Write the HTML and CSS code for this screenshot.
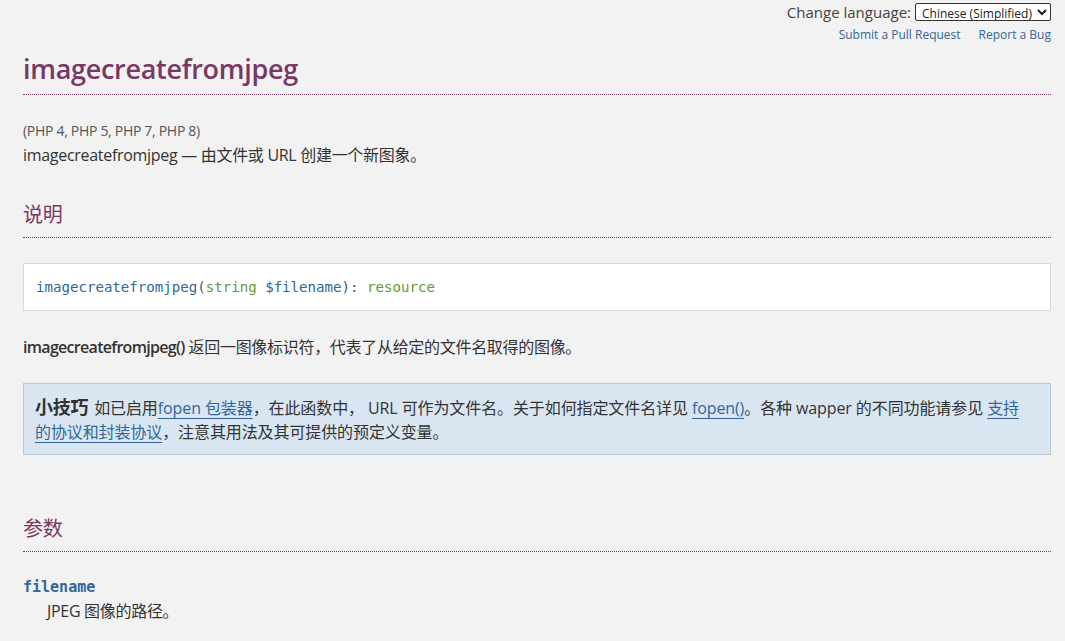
FILE: index.html
```html
<!DOCTYPE html>
<html lang="zh-CN">
<head>
<meta charset="utf-8">
<title>imagecreatefromjpeg</title>
<link rel="stylesheet" href="styles.css">
</head>
<body>
<div class="page">
  <div class="topbar">
    <div class="lang">
      <label class="lang-label">Change language:</label>
      <select class="lang-select"><option>Chinese (Simplified)</option></select>
    </div>
    <div class="edit-links">
      <a href="#">Submit a Pull Request</a>
      <a href="#">Report a Bug</a>
    </div>
  </div>

  <h1 class="refname">imagecreatefromjpeg</h1>

  <div class="refnamediv">
    <p class="verinfo">(PHP 4, PHP 5, PHP 7, PHP 8)</p>
    <p class="refpurpose">imagecreatefromjpeg — 由文件或 URL 创建一个新图象。</p>
  </div>

  <h2 class="section-title">说明</h2>
  <div class="methodsynopsis"><span class="fn">imagecreatefromjpeg</span><span class="punc">(</span><span class="type">string</span> <span class="var">$filename</span><span class="punc">): </span><span class="type">resource</span></div>

  <p class="para"><strong>imagecreatefromjpeg()</strong> 返回一图像标识符，代表了从给定的文件名取得的图像。</p>

  <div class="tip">
    <strong class="tip-title">小技巧</strong> 如已启用<a href="#">fopen 包装器</a>，在此函数中， URL 可作为文件名。关于如何指定文件名详见 <a href="#">fopen()</a>。各种 wapper 的不同功能请参见 <a href="#">支持的协议和封装协议</a>，注意其用法及其可提供的预定义变量。
  </div>

  <h2 class="section-title params">参数</h2>
  <dl class="params-list">
    <dt class="param-name">filename</dt>
    <dd class="param-desc">JPEG 图像的路径。</dd>
  </dl>
</div>
</body>
</html>
```

FILE: styles.css
```css
html, body {
  margin: 0;
  padding: 0;
  background: #f2f2f2;
}
body {
  font-family: "Open Sans", "Noto Sans CJK SC", sans-serif;
  color: #333333;
  font-size: 16px;
  letter-spacing: -0.3px;
}
a {
  color: #336699;
  text-decoration: underline;
  text-decoration-thickness: 1px;
  text-underline-offset: 4px;
}
.page {
  padding: 0 14px 0 23px;
}
.topbar {
  display: flex;
  flex-direction: column;
  align-items: flex-end;
  letter-spacing: 0;
}
.lang {
  display: flex;
  align-items: center;
  gap: 4px;
  height: 23px;
}
.lang-label {
  font-size: 15px;
  color: #444;
}
.lang-select {
  font-family: "Open Sans", sans-serif;
  font-size: 12px;
  height: 18px;
  width: 136px;
  padding: 0 2px;
  border: 1px solid #333;
  border-radius: 2px;
  background: #fff;
  color: #222;
}
.edit-links {
  display: flex;
  gap: 18px;
  margin-top: 3px;
  font-size: 12px;
}
.edit-links a {
  text-decoration: none;
}
.refname {
  margin: 7px 0 0;
  font-size: 27px;
  font-weight: 600;
  color: #793862;
  line-height: 38px;
  padding-bottom: 6px;
  border-bottom: 1px dotted #793862;
  letter-spacing: -0.3px;
}
.refnamediv {
  margin-top: 25px;
}
.verinfo {
  margin: 0;
  font-size: 14px;
  color: #555;
  line-height: 22px;
}
.refpurpose {
  margin: 0;
  line-height: 26px;
}
.section-title {
  margin: 33px 0 0;
  font-size: 20px;
  font-weight: 400;
  color: #793862;
  line-height: 28px;
  padding-bottom: 8px;
  border-bottom: 1px dotted #793862;
}
.methodsynopsis {
  margin-top: 25px;
  background: #fff;
  border: 1px solid #d9d9d9;
  padding: 12px 12px;
  font-family: "DejaVu Sans Mono", monospace;
  font-size: 14.1px;
  line-height: 22px;
  letter-spacing: 0;
}
.fn, .var { color: #336699; }
.type { color: #669933; }
.punc { color: #555; }
.para {
  margin: 24px 0 0;
  line-height: 24px;
}
.para strong {
  font-weight: 600;
  letter-spacing: -0.7px;
}
.tip {
  margin-top: 24px;
  background: #d9e6f2;
  border: 1px solid #b8c9da;
  padding: 11px 30px 10px 11px;
  line-height: 24px;
  letter-spacing: -0.1px;
}
.tip-title {
  font-size: 18px;
  font-weight: 700;
  margin-right: 2px;
  letter-spacing: -0.3px;
}
.params {
  margin-top: 60px;
}
.params-list {
  margin: 23px 0 0;
}
.param-name {
  font-family: "DejaVu Sans Mono", monospace;
  font-weight: 700;
  color: #336699;
  font-size: 15px;
  line-height: 24px;
  letter-spacing: 0;
}
.param-desc {
  margin-left: 24px;
  line-height: 24px;
}
```
